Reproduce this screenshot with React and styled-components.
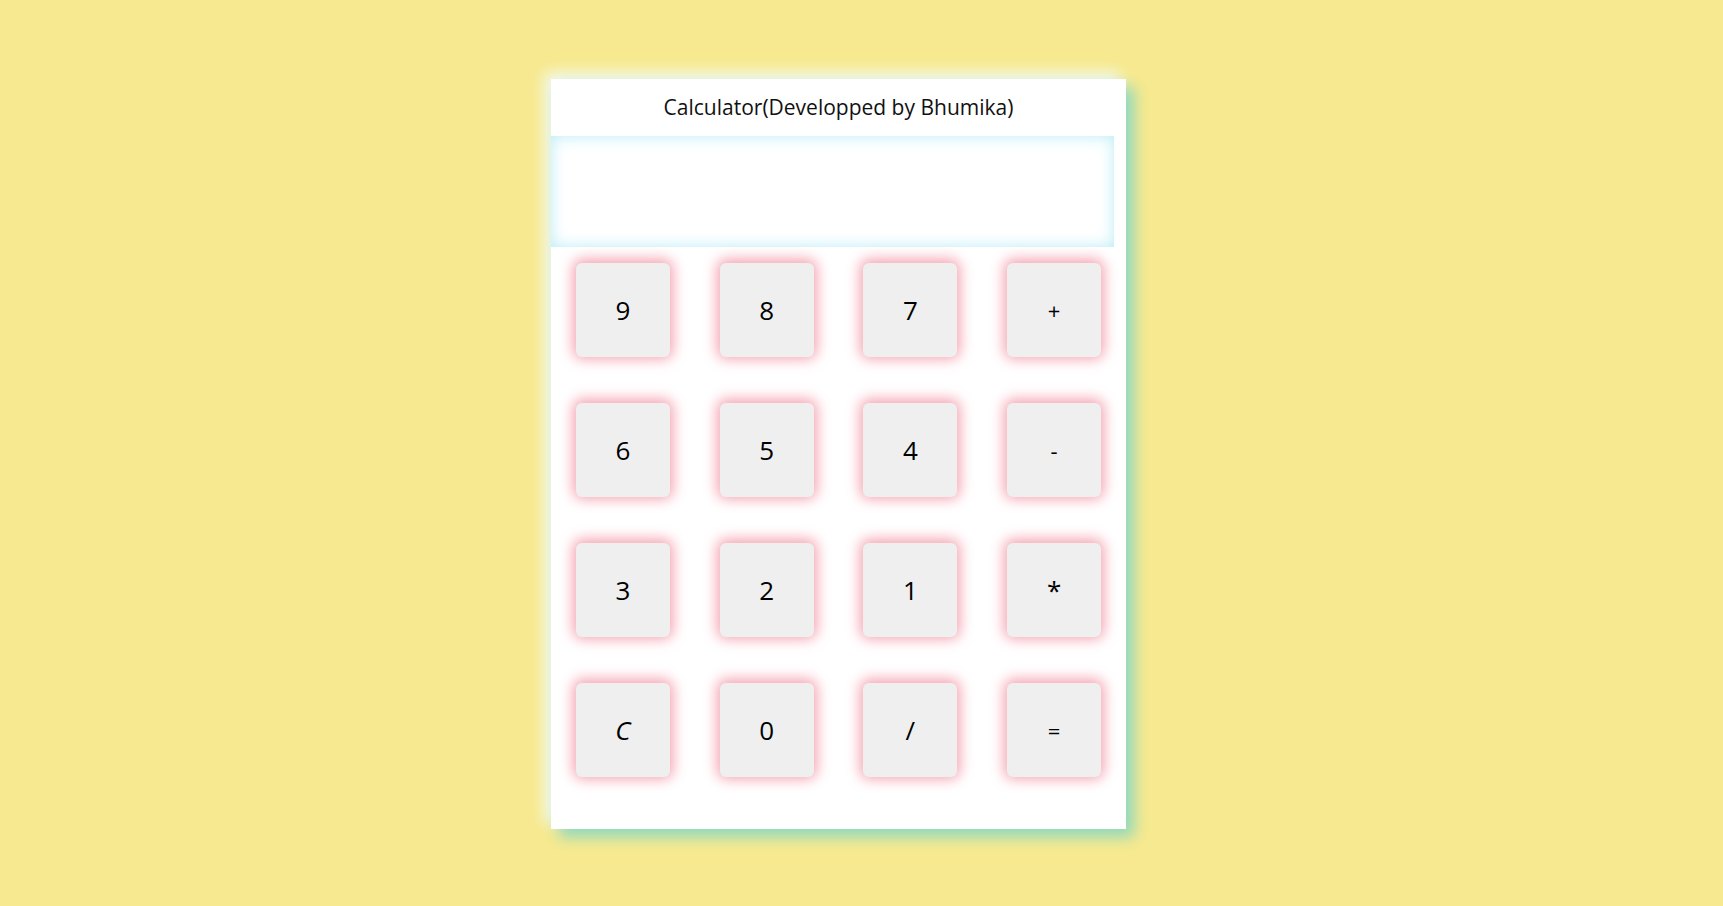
import React, { useState } from "react";
import styled, { createGlobalStyle } from "styled-components";

const GlobalStyle = createGlobalStyle`
  body {
    margin: 0;
    background: #f7e98f;
    font-family: "Comic Sans MS", "Open Sans", "DejaVu Sans", sans-serif;
  }
`;

const keys = ["9", "8", "7", "+", "6", "5", "4", "-", "3", "2", "1", "*", "C", "0", "/", "="];

const App = () => {
  const [value, setValue] = useState("");

  const press = (k) => {
    if (k === "C") return setValue("");
    if (k === "=") {
      try {
        // eslint-disable-next-line no-new-func
        setValue(String(Function(`return (${value})`)()));
      } catch (e) {
        setValue("Error");
      }
      return;
    }
    setValue(value + k);
  };

  return (
    <Page>
      <GlobalStyle />
      <Card>
        <Title>Calculator(Developped by Bhumika)</Title>
        <Display value={value} readOnly />
        <Keypad>
          {keys.map((k) => (
            <Key key={k} $italic={k === "C"} $small={k === "+" || k === "-" || k === "="} onClick={() => press(k)}>
              {k}
            </Key>
          ))}
        </Keypad>
      </Card>
    </Page>
  );
};
export default App;

const Page = styled.div`
  min-height: 100vh;
  display: flex;
  justify-content: center;
  align-items: flex-start;
  padding: 79px 46px 0 0;
  box-sizing: border-box;
`;

const Card = styled.div`
  width: 575px;
  background: #fff;
  box-shadow: 8px 8px 14px #8dd8bd, -6px -6px 14px #f2fbfb;
`;

const Title = styled.div`
  height: 57px;
  line-height: 57px;
  text-align: center;
  font-size: 21px;
  color: #111;
`;

const Display = styled.input`
  display: block;
  width: 563px;
  height: 111px;
  border: none;
  outline: none;
  padding: 0 12px;
  box-sizing: border-box;
  background: #fff;
  box-shadow: inset 0 0 16px #b8ecf6;
  font-family: inherit;
  font-size: 32px;
  text-align: right;
`;

const Keypad = styled.div`
  display: grid;
  grid-template-columns: repeat(4, 1fr);
  justify-items: center;
  row-gap: 46px;
  padding: 16px 0 52px;
`;

const Key = styled.button`
  width: 94px;
  height: 94px;
  border: none;
  border-radius: 6px;
  background: #efefef;
  box-shadow: 0 -1px 14px 3px #f5a2b0;
  font-family: inherit;
  font-size: ${(p) => (p.$small ? "22px" : "26px")};
  font-style: ${(p) => (p.$italic ? "italic" : "normal")};
  color: #000;
  cursor: pointer;
`;
